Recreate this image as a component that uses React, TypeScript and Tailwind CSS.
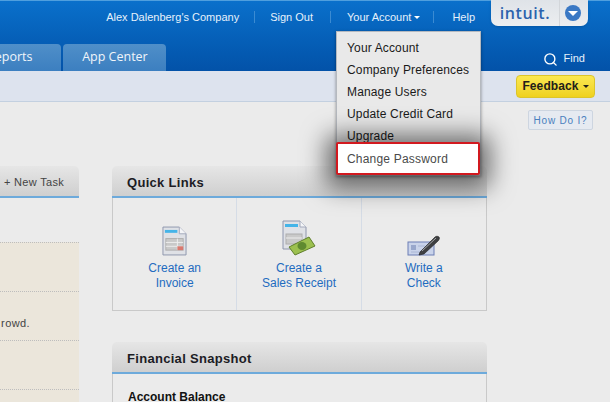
import React from 'react';
import { Search } from 'lucide-react';

const menuItems = ['Your Account', 'Company Preferences', 'Manage Users', 'Update Credit Card', 'Upgrade'];

const Caret: React.FC<{ className: string }> = ({ className }) => (
  <span className={`inline-block w-0 h-0 border-x-[3px] border-x-transparent border-t-[3px] ${className}`}></span>
);

const InvoiceIcon = () => (
  <svg width="25" height="30" viewBox="0 0 26 31">
    <path d="M1 1H18L25 8V30H1Z" fill="#dfe1e6" stroke="#8e96ad" />
    <path d="M18 1V8H25" fill="#f4f5f7" stroke="#a3a9bb" />
    <rect x="3" y="4" width="13" height="3" fill="#45b4e8" />
    <rect x="4" y="13" width="18" height="12" fill="#c9c9c9" stroke="#aeaeae" />
    <path d="M4 17H22M4 21H22M16 13V25" stroke="#ededed" />
    <rect x="16" y="21" width="6" height="4" fill="#d9796f" />
  </svg>
);

const ReceiptIcon = () => (
  <svg width="34" height="36" viewBox="0 0 34 36">
    <path d="M1 1H18L24 7V29H1Z" fill="#dfe1e6" stroke="#8e96ad" />
    <path d="M18 1V7H24" fill="#f4f5f7" stroke="#a3a9bb" />
    <rect x="3" y="4" width="13" height="3" fill="#45b4e8" />
    <rect x="4" y="14" width="16" height="10" fill="#c9c9c9" stroke="#aeaeae" />
    <path d="M4 18H20" stroke="#ededed" />
    <path d="M7 27L27 17L33 26L13 35Z" fill="#9cc04f" stroke="#5f7f2c" />
    <ellipse cx="20" cy="26" rx="4.5" ry="4" fill="#5f8a30" />
  </svg>
);

const CheckIcon = () => (
  <svg width="33" height="21" viewBox="0 0 33 21">
    <rect x="1" y="7" width="26" height="13" fill="#c9d3ea" stroke="#6d7fb5" />
    <rect x="4" y="10" width="5" height="5" fill="#98a7cc" />
    <path d="M11 11H18M4 17H14" stroke="#aab6d4" />
    <path d="M13 17L28 2C29 1 31 1 32 2C33 3 32 5 31 6L17 19L12 20Z" fill="#3f4042" stroke="#1f1f1f" strokeWidth="0.6" />
    <path d="M15 16L29 3" stroke="#a5a7aa" />
  </svg>
);

const quickLinks = [
  { id: 'invoice', lines: ['Create an', 'Invoice'], icon: <InvoiceIcon /> },
  { id: 'receipt', lines: ['Create a', 'Sales Receipt'], icon: <ReceiptIcon /> },
  { id: 'check', lines: ['Write a', 'Check'], icon: <CheckIcon /> },
];

const PanelHeader: React.FC<{ children: React.ReactNode; className?: string }> = ({ children, className = '' }) => (
  <div className={`h-[32px] pt-[3px] rounded-t-[5px] bg-gradient-to-b from-[#e6e6e6] to-[#cfcfcf] border-b-[2px] border-[#6daadb] flex items-center ${className}`}>
    {children}
  </div>
);

const App: React.FC = () => {
  return (
    <div className="relative w-[610px] h-[402px] overflow-hidden bg-[#ebebeb] font-['Liberation_Sans',sans-serif]">
      {/* top bar */}
      <div className="h-[71px] flex flex-col border-t border-[#4f9fde] bg-gradient-to-b from-[#0a70cb] to-[#0352a8]">
        <div className="h-[43px] flex items-start justify-end pr-[22px] text-[11px] text-[#e6f1fb]">
          <div className="flex items-center h-[32px]">
            <span>Alex Dalenberg's Company</span>
            <span className="w-px h-[12px] bg-[#3b8bd2] ml-[15px] mr-[15px]"></span>
            <span>Sign Out</span>
            <span className="w-px h-[12px] bg-[#3b8bd2] ml-[17px] mr-[16px]"></span>
            <span>Your Account</span>
            <Caret className="border-t-white ml-[3px]" />
            <span className="w-px h-[12px] bg-[#3b8bd2] ml-[13px] mr-[18px]"></span>
            <span>Help</span>
          </div>
          <div className="ml-[16px] w-[97px] h-[26px] -mt-px rounded-b-[7px] bg-gradient-to-b from-[#dfe3e8] to-[#eceef0] flex items-center shadow-sm">
            <span className="w-[68px] text-center font-['Open_Sans',sans-serif] text-[16px] font-semibold tracking-[0.6px] text-[#2c62ad] leading-none">intuit.</span>
            <span className="w-px h-full bg-[#d3d6da]"></span>
            <span className="ml-[5px] w-[16px] h-[16px] rounded-full bg-[#3a78c4] flex items-center justify-center">
              <Caret className="border-x-[5px] border-t-[5px] border-t-white mt-[1px]" />
            </span>
          </div>
        </div>
        <div className="h-[27px] flex items-end">
          <div className="-ml-[42px] h-[27px] px-[29px] rounded-t-[4px] bg-gradient-to-b from-[#4f8fc9] to-[#3c7fc0] text-[12.5px] text-[#f0f5fa] font-['Open_Sans',sans-serif] flex items-center">Reports</div>
          <div className="ml-[2px] h-[27px] w-[103px] justify-center rounded-t-[4px] bg-gradient-to-b from-[#4f8fc9] to-[#3c7fc0] text-[12.5px] text-[#f0f5fa] font-['Open_Sans',sans-serif] flex items-center">App Center</div>
          <div className="ml-auto mr-[25px] h-[27px] pt-[3px] flex items-center gap-[6px] text-[11px] text-[#e6f1fb]">
            <Search className="w-[15px] h-[15px] mt-[1px] text-white" strokeWidth={2.2} />
            <span className="-mt-[2px]">Find</span>
          </div>
        </div>
      </div>

      {/* sub bar */}
      <div className="h-[31px] flex items-center justify-end pr-[15px] bg-[#dde3ee] border-b border-[#c3d0e0]">
        <button className="h-[23px] w-[79px] rounded-[4px] border border-[#dcc52a] bg-gradient-to-b from-[#fbe84f] to-[#efd11c] text-[12px] font-bold tracking-[0.1px] text-[#22201a] flex items-center justify-center gap-[4px]">
          Feedback
          <Caret className="border-t-[#22201a]" />
        </button>
      </div>

      {/* content */}
      <div className="flex items-start">
        <div className="w-[79px] mt-[64px]">
          <PanelHeader className="justify-end pr-[15px] rounded-tl-none">
            <span className="text-[11px] tracking-[0.3px] text-[#444444]">+ New Task</span>
          </PanelHeader>
          <div className="h-[44px]"></div>
          <div className="bg-[#ebe6db]">
            <div className="h-[49px] border-t border-dotted border-[#bdbdbd]"></div>
            <div className="h-[49px] border-t border-dotted border-[#bdbdbd] text-[11px] tracking-[0.4px] text-[#444444] pt-[25px] leading-[13px] text-right pr-[49px]">rowd.</div>
            <div className="h-[49px] border-t border-dotted border-[#bdbdbd]"></div>
            <div className="h-[30px] border-t border-dotted border-[#bdbdbd]"></div>
          </div>
        </div>

        <div className="ml-[33px] w-[375px] mt-[64px]">
          <PanelHeader className="pl-[15px]">
            <span className="text-[13px] font-bold tracking-[0.3px] text-[#1c1c24]">Quick Links</span>
          </PanelHeader>
          <div className="h-[113px] grid grid-cols-3 border-x border-b border-[#c9c9c9]">
            {quickLinks.map((link, i) => (
              <div key={link.id} className={`flex flex-col items-center ${i < 2 ? 'border-r border-[#d5dce6]' : ''}`}>
                <div className="h-[58px] flex items-end justify-center">{link.icon}</div>
                <div className="mt-[5px] text-[12px] leading-[15px] text-center text-[#1f6cc0]">
                  {link.lines.map(line => (
                    <div key={line}>{line}</div>
                  ))}
                </div>
              </div>
            ))}
          </div>
          <PanelHeader className="mt-[31px] pl-[15px]">
            <span className="text-[13px] font-bold tracking-[0.3px] text-[#1c1c24]">Financial Snapshot</span>
          </PanelHeader>
          <div className="h-[60px] border-x border-[#c9c9c9] pl-[15px] pt-[15px] text-[12px] font-bold leading-[16px] text-[#111111]">Account Balance</div>
        </div>

        <div className="ml-[41px] mt-[8px]">
          <div className="h-[20px] w-[65px] rounded-[2px] border border-[#cdd5e0] bg-[#e6eaf1] text-[10px] tracking-[0.8px] text-[#4a7fbe] flex items-center justify-center">How Do I?</div>
        </div>
      </div>

      {/* account dropdown */}
      <div className="absolute left-[336px] top-[31px] w-[145px] bg-[#e9e9e9] border border-[#b5b9bf] shadow-[0_1px_3px_rgba(0,0,0,0.4)]">
        <div className="pt-[5px]">
          {menuItems.map(item => (
            <div key={item} className="h-[22px] pl-[10px] flex items-center text-[12px] tracking-[0.15px] text-[#1a1a1a]">{item}</div>
          ))}
        </div>
        <div className="relative -mt-[5px] -ml-px w-[144px] h-[33px] pl-[9px] flex items-center bg-white border-2 border-[#d2191f] rounded-[2px] text-[12px] tracking-[0.2px] text-[#4a4a4a] shadow-[0_3px_24px_10px_rgba(0,0,0,0.55)]">Change Password</div>
      </div>
    </div>
  );
};

export default App;
